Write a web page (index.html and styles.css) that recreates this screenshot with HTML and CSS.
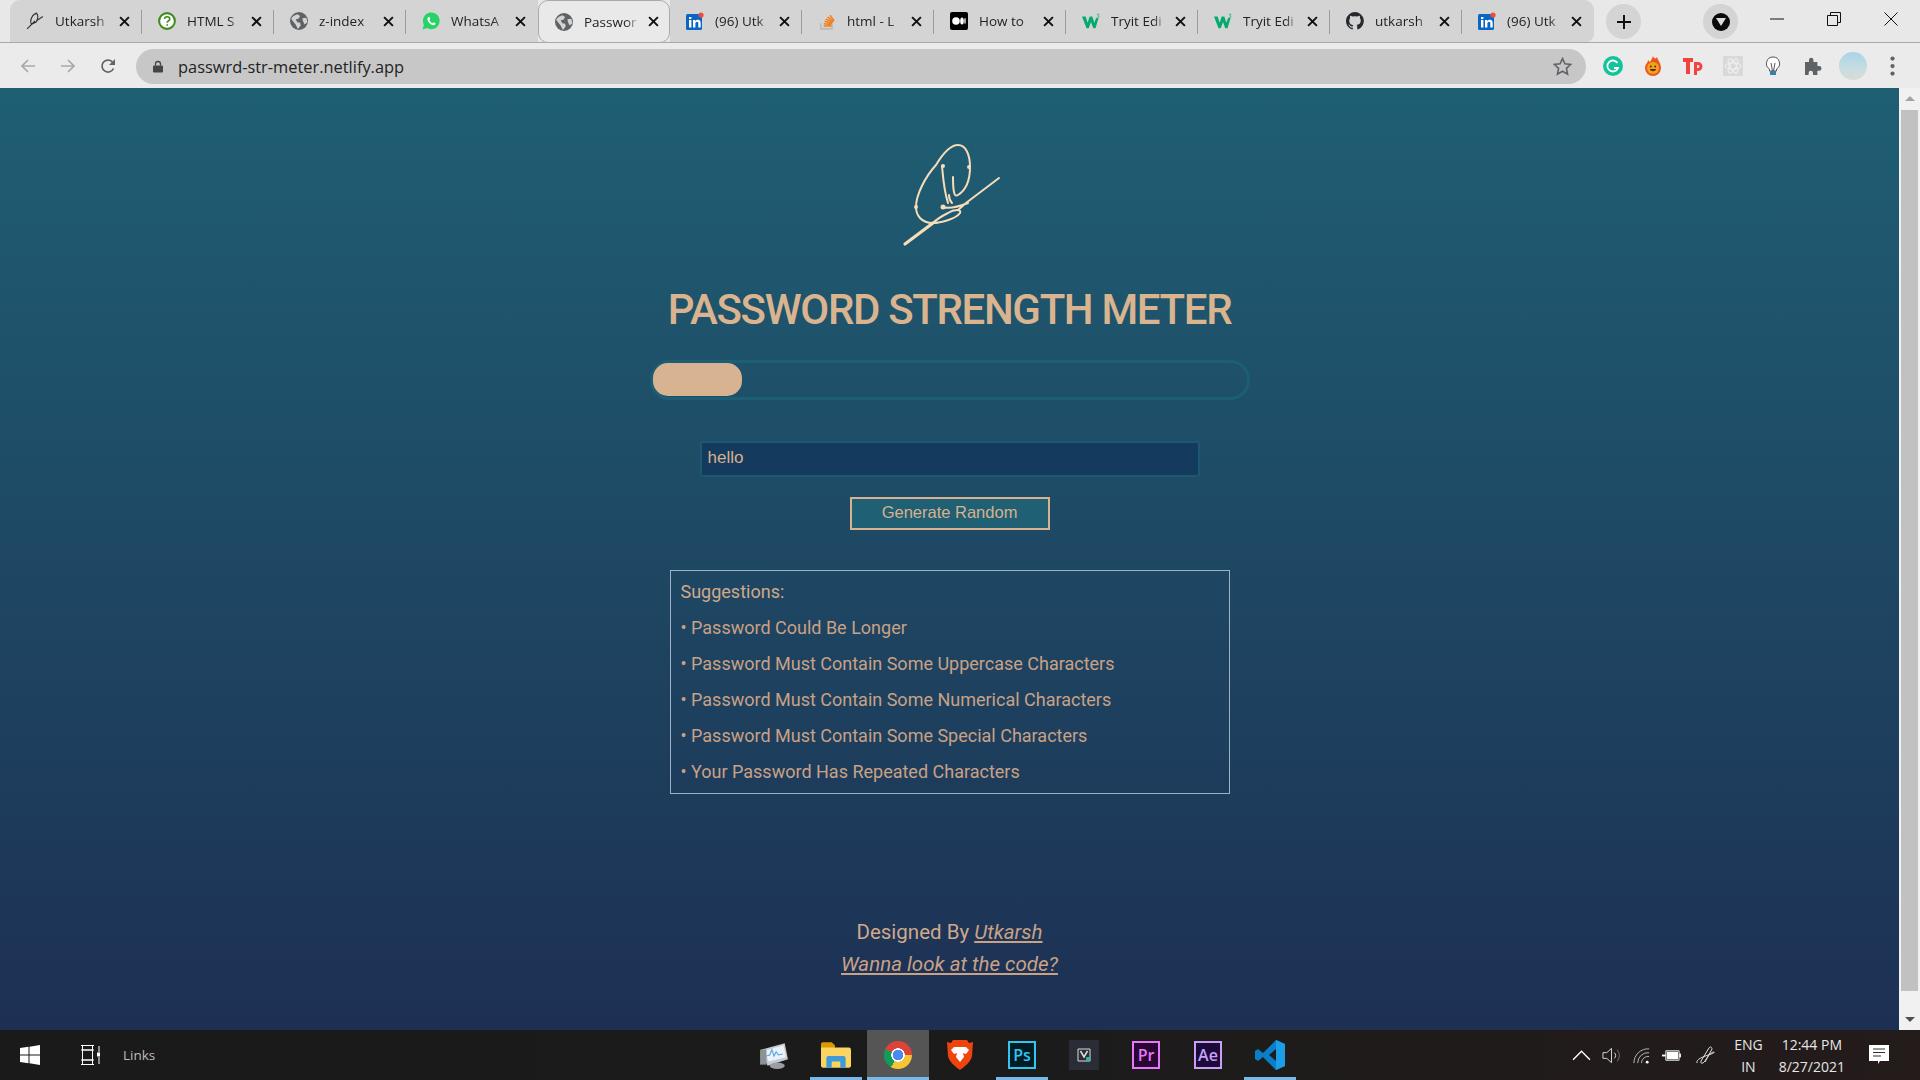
FILE: index.html

```html
<!DOCTYPE html>
<html lang="en">
<head>
  <meta charset="UTF-8">
  <meta name="viewport" content="width=device-width, initial-scale=1.0">
  <link rel="stylesheet" href="styles.css">
  <title>Password Strength Meter</title>
</head>
<body>
  <svg class="defs" width="0" height="0">
    <symbol id="globe" viewBox="0 0 16 16">
      <circle cx="8" cy="8" r="8" fill="#5f6368"/>
      <path d="M3 3.500 6.500 2 9 3.500 7.500 6 5 6.500 6.500 9 9 9.500 9.500 12 7 15 5 11 2.500 8 1 6ZM11 5.500l3.500-.5L15.500 9 13 11 11.500 8Z" fill="#d3d3d3"/>
    </symbol>
    <symbol id="linkedin" viewBox="0 0 18 18">
      <rect y="2" width="16" height="16" rx="1.500" fill="#0a66c2"/>
      <path d="M3 8h2.400v7.500H3ZM3 5h2.400v2H3ZM7 8h2.300v1.200C10 8.200 11 7.800 12 7.800c2 0 2.700 1.300 2.700 3.300v4.400h-2.400v-4c0-1-.3-1.700-1.200-1.700-1 0-1.700.7-1.700 1.800v3.900H7Z" fill="#fff"/>
      <circle cx="15" cy="3" r="2.600" fill="#ee4b3e"/>
    </symbol>
    <symbol id="wthree" viewBox="0 0 20 16">
      <path d="M0 3h4l2.300 7L8.500 3h3l2.200 7L15.500 5l3-.5L15 16h-2.500L10 9 7.500 16H5Z" fill="#04aa6d"/>
      <path d="M16.500.5h2.500l-1.300 1.500c1.500 0 1.500 2-.1 2-.5 0-.9-.1-1.200-.4" stroke="#04aa6d" stroke-width=".7" fill="none"/>
    </symbol>
    <symbol id="close" viewBox="0 0 10 10">
      <path d="M1 1l8 8M9 1 1 9" stroke="#111" stroke-width="1.800" fill="none"/>
    </symbol>
  </svg>

  <header class="tabstrip">
    <div class="tab">
      <svg class="favicon" viewBox="0 0 16 16"><path d="M1 15 8 8M5 11C3 8 5 3 9 1c2 1 2 5 0 8l-4 2ZM9 8l6-4" stroke="#333" fill="none"/></svg>
      <span class="tab-title">Utkarsh</span>
      <svg class="tab-close"><use href="#close"/></svg>
    </div>
    <div class="tab">
      <svg class="favicon" viewBox="0 0 16 16"><circle cx="8" cy="8" r="7" fill="#fff" stroke="#3f8a1c" stroke-width="1.800"/><path d="M5.700 6.200C5.900 4.800 6.800 4.200 8 4.200c1.400 0 2.400.8 2.400 2 0 1.800-2.200 1.700-2.200 3.400M8.200 10.800v1.400" stroke="#3f8a1c" stroke-width="1.500" fill="none"/></svg>
      <span class="tab-title">HTML S</span>
      <svg class="tab-close"><use href="#close"/></svg>
    </div>
    <div class="tab">
      <svg class="favicon"><use href="#globe"/></svg>
      <span class="tab-title">z-index</span>
      <svg class="tab-close"><use href="#close"/></svg>
    </div>
    <div class="tab tab-nosep">
      <svg class="favicon" viewBox="0 0 16 16"><path d="M.5 15.500 1.700 11.300A7.400 7.400 0 1 1 4.600 14.300Z" fill="#25d366"/><path d="M5.500 4.500c-1 1-1 2.500.2 4.200 1.300 1.800 3 3 4.600 3 1 0 1.800-.7 1.800-1.700L10.300 9l-.9.900C8.300 9.500 7 8.200 6.600 7l.8-.9-.9-1.800Z" fill="#fff"/></svg>
      <span class="tab-title">WhatsA</span>
      <svg class="tab-close"><use href="#close"/></svg>
    </div>
    <div class="tab tab-active tab-nosep">
      <svg class="favicon"><use href="#globe"/></svg>
      <span class="tab-title">Passwor</span>
      <svg class="tab-close"><use href="#close"/></svg>
    </div>
    <div class="tab">
      <svg class="favicon"><use href="#linkedin"/></svg>
      <span class="tab-title">(96) Utk</span>
      <svg class="tab-close"><use href="#close"/></svg>
    </div>
    <div class="tab">
      <svg class="favicon" viewBox="0 0 16 16"><path d="M2.500 10v5h10v-5" stroke="#bcbbbb" stroke-width="1.400" fill="none"/><path d="M5 12.500h7M5.200 10.400l6.800.8M5.800 8.300l6.600 1.900M7 6.200l6 3.200M8.700 4.300l5 4.400M10.700 2.800l3.600 5.200" stroke="#f48024" stroke-width="1.400" fill="none"/></svg>
      <span class="tab-title">html - L</span>
      <svg class="tab-close"><use href="#close"/></svg>
    </div>
    <div class="tab">
      <svg class="favicon" viewBox="0 0 18 18"><rect width="18" height="18" rx="2" fill="#000"/><circle cx="6" cy="9" r="3.800" fill="#fff"/><ellipse cx="12" cy="9" rx="1.800" ry="3.500" fill="#fff"/><ellipse cx="15" cy="9" rx=".7" ry="3.200" fill="#fff"/></svg>
      <span class="tab-title">How to</span>
      <svg class="tab-close"><use href="#close"/></svg>
    </div>
    <div class="tab">
      <svg class="favicon"><use href="#wthree"/></svg>
      <span class="tab-title">Tryit Edi</span>
      <svg class="tab-close"><use href="#close"/></svg>
    </div>
    <div class="tab">
      <svg class="favicon"><use href="#wthree"/></svg>
      <span class="tab-title">Tryit Edi</span>
      <svg class="tab-close"><use href="#close"/></svg>
    </div>
    <div class="tab">
      <svg class="favicon" viewBox="0 0 16 16"><path d="M8 0a8 8 0 0 0-2.500 15.600c.4.100.5-.2.500-.4v-1.400c-2.200.5-2.700-1-2.700-1-.4-.9-.9-1.200-.9-1.200-.7-.5.100-.5.100-.5.800.1 1.200.8 1.200.8.700 1.200 1.900.9 2.300.7.100-.5.300-.9.500-1.100-1.800-.2-3.600-.9-3.600-4 0-.9.300-1.600.8-2.100-.1-.2-.4-1 .1-2.100 0 0 .7-.2 2.200.8a7.600 7.600 0 0 1 4 0c1.500-1 2.200-.8 2.200-.8.400 1.100.2 1.900.1 2.100.5.600.8 1.300.8 2.100 0 3.100-1.900 3.700-3.700 3.900.3.300.6.800.6 1.500v2.200c0 .2.100.5.600.4A8 8 0 0 0 8 0Z" fill="#24292e"/></svg>
      <span class="tab-title">utkarsh</span>
      <svg class="tab-close"><use href="#close"/></svg>
    </div>
    <div class="tab tab-last tab-nosep">
      <svg class="favicon"><use href="#linkedin"/></svg>
      <span class="tab-title">(96) Utk</span>
      <svg class="tab-close"><use href="#close"/></svg>
    </div>
    <button class="newtab">
      <svg width="14" height="14" viewBox="0 0 14 14"><path d="M7 0v14M0 7h14" stroke="#111" stroke-width="2"/></svg>
    </button>
    <div class="profile-menu"><span class="profile-dot"><svg width="10" height="8" viewBox="0 0 10 8"><path d="M0 0h10L5 8Z" fill="#ddd"/></svg></span></div>
    <div class="window-controls">
      <svg width="14" height="14" viewBox="0 0 14 14"><path d="M0 7h14" stroke="#111"/></svg>
      <svg width="14" height="14" viewBox="0 0 14 14"><path d="M.5 3.500h10v10H.5ZM3.500 3.500v-3h10v10h-3" stroke="#111" fill="none"/></svg>
      <svg width="14" height="14" viewBox="0 0 14 14"><path d="M.5.500l13 13M13.500.500l-13 13" stroke="#111" fill="none"/></svg>
    </div>
  </header>

  <nav class="toolbar">
    <svg class="nav-icon" viewBox="0 0 16 16"><path d="M15 8H2M8 2 2 8l6 6" stroke="#a9a9a9" stroke-width="1.700" fill="none"/></svg>
    <svg class="nav-icon" viewBox="0 0 16 16"><path d="M1 8h13M8 2l6 6-6 6" stroke="#a9a9a9" stroke-width="1.700" fill="none"/></svg>
    <svg class="nav-icon" viewBox="0 0 16 16"><path d="M13.500 10.500A6 6 0 1 1 12.300 3.800" stroke="#5f6368" stroke-width="1.700" fill="none"/><path d="M15 1v6H9Z" fill="#5f6368"/></svg>
    <div class="omnibox">
      <svg class="lock" viewBox="0 0 10 12"><path d="M2.500 5V3.500a2.500 2.500 0 0 1 5 0V5" stroke="#444" stroke-width="1.300" fill="none"/><rect y="5" width="10" height="7" rx="1" fill="#444"/></svg>
      <span class="url">passwrd-str-meter.netlify.app</span>
      <svg class="star" viewBox="0 0 18 18"><path d="M9 1.500l2.300 5 5.400.6-4 3.700 1.100 5.400L9 13.500l-4.800 2.700 1.100-5.400-4-3.700 5.400-.6Z" stroke="#5f6368" stroke-width="1.500" fill="none"/></svg>
    </div>
    <div class="extensions">
      <svg class="ext" viewBox="0 0 20 20"><circle cx="10" cy="10" r="10" fill="#15c39a"/><path d="M14.500 7A5.500 5.500 0 1 0 15 12h-4" stroke="#fff" stroke-width="1.800" fill="none"/></svg>
      <svg class="ext" viewBox="0 0 20 20"><path d="M10 0c1 3 3 3 4 1 0 2 4 6 4 11a8 8 0 0 1-16 0c0-4 3-5 3-8 1 1 2 2 2 2 1-2 2-3 3-6Z" fill="#e8591c"/><circle cx="10" cy="12" r="6" fill="#f3a21e"/><path d="M6.800 13c1 3 5.400 3 6.400 0Z" fill="#5b2c08"/><circle cx="7.800" cy="10.500" r="1" fill="#5b2c08"/><circle cx="12.200" cy="10.500" r="1" fill="#5b2c08"/></svg>
      <svg class="ext" viewBox="0 0 20 20"><path d="M0 2h10v4H7v12H3V6H0ZM11 6h4a4 4 0 0 1 0 9h-1v4h-3Zm3 3v3h1a1.500 1.500 0 0 0 0-3Z" fill="#f4433c"/></svg>
      <svg class="ext" viewBox="0 0 20 20"><rect width="20" height="20" rx="1" fill="#d9d9d9"/><ellipse cx="10" cy="10" rx="8" ry="3.200" stroke="#f2f2f2" fill="none"/><ellipse cx="10" cy="10" rx="8" ry="3.200" transform="rotate(60 10 10)" stroke="#f2f2f2" fill="none"/><ellipse cx="10" cy="10" rx="8" ry="3.200" transform="rotate(120 10 10)" stroke="#f2f2f2" fill="none"/></svg>
      <svg class="ext" viewBox="0 0 20 20"><path d="M10 1a6.500 6.500 0 0 0-3.500 12v2h7v-2A6.500 6.500 0 0 0 10 1Z" fill="#fff" stroke="#555"/><path d="M8 7l1.500 8M12 7l-1.500 8" stroke="#555" fill="none"/><rect x="7" y="15" width="6" height="4" fill="#3b7fa8"/></svg>
      <svg class="ext" viewBox="0 0 20 20"><path d="M2 6h4V4a2.200 2.200 0 0 1 4.400 0v2h4v4h1.700a2.400 2.400 0 0 1 0 4.800h-1.700V19H10v-2a2.200 2.200 0 0 0-4.400 0v2H2Z" fill="#5f6368"/></svg>
      <span class="avatar"></span>
      <svg class="ext ext-menu" viewBox="0 0 4 16"><circle cx="2" cy="2" r="1.700" fill="#5f6368"/><circle cx="2" cy="8" r="1.700" fill="#5f6368"/><circle cx="2" cy="14" r="1.700" fill="#5f6368"/></svg>
    </div>
  </nav>

  <div class="viewport">
    <main class="page">
      <svg class="signature" viewBox="0 0 110 115">
        <path class="signature-tail" d="M5 109 33 88"/>
        <path d="M33 88C21 88 16 80 16 72 16 60 25 42 36 30 42 20 50 10 58 10 66 10 70 20 70 32 70 45 66 55 58 60 55 62 53 60 53 42M42 31C43 42 44 56 48 68M49 60C49 64 50 66 52 68M42 72C48 74 58 72 68 68M33 88C40 88 56 84 60 78 62 74 54 74 48 78 42 81 36 85 33 88M99 43 66 68 58 75"/>
        <circle cx="43" cy="31" r="2"/>
        <circle cx="69" cy="32" r="2"/>
        <circle cx="16" cy="72" r="2"/>
        <circle cx="43" cy="72" r="2.500"/>
      </svg>
      <h1 class="title">PASSWORD STRENGTH METER</h1>
      <div class="meter"><div class="meter-fill" style="width: 89px"></div></div>
      <input class="password" type="text" value="hello">
      <button class="generate">Generate Random</button>
      <section class="suggestions">
        <p class="suggestions-head">Suggestions:</p>
        <p>&bull; Password Could Be Longer</p>
        <p>&bull; Password Must Contain Some Uppercase Characters</p>
        <p>&bull; Password Must Contain Some Numerical Characters</p>
        <p>&bull; Password Must Contain Some Special Characters</p>
        <p>&bull; Your Password Has Repeated Characters</p>
      </section>
      <footer class="credits">
        <p>Designed By <a href="#">Utkarsh</a></p>
        <p><a href="#">Wanna look at the code?</a></p>
      </footer>
    </main>
    <div class="scrollbar">
      <span class="arrow-up"></span>
      <span class="thumb"></span>
      <span class="arrow-down"></span>
    </div>
  </div>

  <footer class="taskbar">
    <div class="task-left">
      <svg class="start" viewBox="0 0 20 20"><path d="M0 3 8.500 1.800V9.500H0ZM9.500 1.700 20 0V9.500H9.500ZM0 10.500H8.500V18.200L0 17ZM9.500 10.500H20V20L9.500 18.300Z" fill="#fff"/></svg>
      <svg class="taskview" viewBox="0 0 20 20"><path d="M1 .5h13M1 19.500h13M2.500 5h10v10h-10ZM1 5h13M1 15h13M2.500 1v4M12.500 1v4M2.500 15v4M12.500 15v4M19 1v6M19 12v7" stroke="#fff" fill="none"/><rect x="17" y="7.500" width="4" height="4" fill="#fff"/></svg>
      <span class="links">Links</span>
    </div>
    <div class="task-apps">
      <span class="app">
        <svg viewBox="0 0 28 26"><path d="M2 8 24 2l3 15-19 6Z" fill="#c8ccd0"/><path d="M5 9l18-5 2 11-16 4Z" fill="#e8f2fa"/><path d="M7 14l3-1 2-5 2 6 2-4 2 3 4-1" stroke="#5ba3d8" fill="none"/><ellipse cx="17" cy="23" rx="7" ry="3" fill="#9a9ea3"/><rect x="1" y="8" width="6" height="14" fill="#8d9196"/><rect x="1.500" y="10" width="2" height="1.500" fill="#46c846"/></svg>
      </span>
      <span class="app app-open">
        <svg viewBox="0 0 28 24"><path d="M0 2a2 2 0 0 1 2-2h8l3 3v4H0Z" fill="#d99a00"/><path d="M0 5h26a2 2 0 0 1 2 2v15a2 2 0 0 1-2 2H2a2 2 0 0 1-2-2Z" fill="#fcd462"/><path d="M5 24v-9a2 2 0 0 1 2-2h14a2 2 0 0 1 2 2v9h-5v-6h-8v6Z" fill="#3f9ad8"/></svg>
      </span>
      <span class="app app-open app-active"><span class="chrome"></span></span>
      <span class="app">
        <svg viewBox="0 0 26 30"><path d="M6 0h14l2 3 4-1-1 14c-1 6-8 11-12 14C9 27 2 22 1 16L0 2l4 1Z" fill="#f0440f"/><path d="M7 7h12l3 3-3 4-3-1 1 4-4 5-4-5 1-4-3 1-3-4Z" fill="#fff"/></svg>
      </span>
      <span class="app app-open"><span class="adobe adobe-ps">Ps</span></span>
      <span class="app">
        <span class="tile"><svg viewBox="0 0 14 14"><path d="M1 1h12v12H1Z" stroke="#ddd" fill="none"/><path d="M3.500 3 7 9l3.500-6" stroke="#ddd" stroke-width="1.600" fill="none"/><rect x="9" y="9" width="4.500" height="4.500" rx="1" fill="#3ab09e"/></svg></span>
      </span>
      <span class="app"><span class="adobe adobe-pr">Pr</span></span>
      <span class="app"><span class="adobe adobe-ae">Ae</span></span>
      <span class="app app-open">
        <svg viewBox="0 0 30 30"><path d="M21 0 30 4V26L21 30 8 17 3 21 0 19V11L3 9l5 4Zm0 9-7 6 7 6Z" fill="#0a7fc8"/><path d="M21 0 30 4V26L21 30Z" fill="#1d9de6"/></svg>
      </span>
    </div>
    <div class="tray">
      <svg class="tray-icon" viewBox="0 0 18 12"><path d="M1 10l8-8 8 8" stroke="#fff" stroke-width="1.300" fill="none"/></svg>
      <svg class="tray-icon" viewBox="0 0 20 20"><path d="M1 7h4l5-4.500v15L5 13H1Z" stroke="#ddd" fill="none"/><path d="M13 7a4 4 0 0 1 0 6" stroke="#ddd" fill="none"/><path d="M16 4a9 9 0 0 1 0 12" stroke="#777" fill="none"/></svg>
      <svg class="tray-icon" viewBox="0 0 20 20"><path d="M2 18A15 15 0 0 1 18 3M6 18A11 11 0 0 1 18 7M10 18A7 7 0 0 1 18 11" stroke="#bbb" fill="none"/><circle cx="16" cy="17" r="1.500" fill="#fff"/></svg>
      <svg class="tray-icon" viewBox="0 0 20 14"><path d="M4 2H18V12H4Z" stroke="#eee" fill="none"/><rect x="5" y="3" width="12" height="8" fill="#fff"/><rect x="18" y="5" width="2" height="4" fill="#eee"/><path d="M0 7h4" stroke="#fff" stroke-width="2"/></svg>
      <svg class="tray-icon tray-pen" viewBox="0 0 20 20"><path d="M1 18C0 14 7 12 12 10 15 9 19 8 18 7 16 7 13 9 9 16 7 19 4 19 5 16L13 3c1-2 3-1 3 1L9 17" stroke="#ddd" fill="none"/></svg>
      <span class="lang"><span>ENG</span><span>IN</span></span>
      <span class="clock"><span>12:44 PM</span><span>8/27/2021</span></span>
      <svg class="notify" viewBox="0 0 20 20"><path d="M0 0h20v16H11l-2 3v-3H0Z" fill="#fff"/><path d="M4 4h12M4 7.500h12M4 11h8" stroke="#333"/></svg>
    </div>
  </footer>
</body>
</html>
```

FILE: styles.css

```css
* {
  box-sizing: border-box;
}

body {
  margin: 0;
  width: 1920px;
  height: 1080px;
  display: flex;
  flex-direction: column;
  overflow: hidden;
  font-family: "Open Sans", sans-serif;
}

.defs {
  display: none;
}

/* browser tabs */
.tabstrip {
  height: 43px;
  flex: none;
  display: flex;
  align-items: flex-start;
  padding-left: 10px;
  background: #e8e8e8;
  border-bottom: 1px solid #a8a8a8;
}

.tab {
  width: 132px;
  height: 42px;
  flex: none;
  display: flex;
  align-items: center;
  padding: 0 12px 0 16px;
  background: #d4d4d4;
  position: relative;
  color: #222;
  font-size: 13.5px;
}

.tab::after {
  content: "";
  position: absolute;
  right: 0;
  top: 10px;
  width: 1px;
  height: 24px;
  background: #9c9c9c;
}

.tab-nosep::after {
  display: none;
}

.tab:first-child {
  border-top-left-radius: 10px;
}

.tab-last {
  border-top-right-radius: 10px;
  border-bottom-right-radius: 8px;
}

.tab-active {
  height: 43px;
  padding-right: 10px;
  background: #e9e9e9;
  border: 1px solid #aaa;
  border-radius: 10px;
}

.favicon {
  width: 18px;
  height: 18px;
  flex: none;
  margin-right: 11px;
}

.tab-title {
  flex: 1;
  min-width: 0;
  white-space: nowrap;
  -webkit-mask-image: linear-gradient(to right, #000 75%, transparent 100%);
  mask-image: linear-gradient(to right, #000 75%, transparent 100%);
}

.tab-close {
  width: 11px;
  height: 11px;
  flex: none;
  margin-left: 8px;
}

.newtab {
  width: 35px;
  height: 35px;
  flex: none;
  margin: 4px 0 0 12px;
  padding: 0;
  border: none;
  border-radius: 50%;
  background: #d4d4d4;
  display: flex;
  align-items: center;
  justify-content: center;
}

.profile-menu {
  width: 35px;
  height: 35px;
  flex: none;
  margin: 4px 0 0 62px;
  border-radius: 50%;
  background: #d4d4d4;
  display: flex;
  align-items: center;
  justify-content: center;
}

.profile-dot {
  width: 18px;
  height: 18px;
  border-radius: 50%;
  background: #0a0a0a;
  display: flex;
  align-items: center;
  justify-content: center;
}

.window-controls {
  margin: 12px 0 0 auto;
  width: 150px;
  padding-right: 22px;
  display: flex;
  justify-content: space-between;
}

/* address bar */
.toolbar {
  height: 45px;
  flex: none;
  display: flex;
  align-items: center;
  padding: 0 20px;
  background: #ebebeb;
}

.nav-icon {
  width: 16px;
  height: 16px;
  flex: none;
  margin-right: 24px;
}

.omnibox {
  width: 1450px;
  height: 35px;
  margin: 1px 0 0 -4px;
  flex: none;
  display: flex;
  align-items: center;
  padding: 0 14px 0 17px;
  border-radius: 18px;
  background: #c7c7c7;
}

.lock {
  width: 10px;
  height: 13px;
  flex: none;
}

.url {
  margin-left: 15px;
  color: #222;
  font-size: 16.4px;
}

.star {
  width: 19px;
  height: 19px;
  margin-left: auto;
}

.extensions {
  flex: 1;
  display: flex;
  align-items: center;
  padding-left: 17px;
  gap: 20px;
}

.ext {
  width: 20px;
  height: 20px;
  flex: none;
}

.ext-menu {
  width: 5px;
  margin-left: 3px;
}

.avatar {
  width: 28px;
  height: 28px;
  flex: none;
  margin-left: -4px;
  border-radius: 50%;
  background: linear-gradient(#a8d4e6, #c8dde0 60%, #d8dcd4);
}

/* the page itself */
.viewport {
  flex: 1;
  min-height: 0;
  display: flex;
}

.page {
  flex: 1;
  display: flex;
  flex-direction: column;
  align-items: center;
  padding-top: 47px;
  background: linear-gradient(#1f5f73, #1d3054);
  color: #d8b18f;
  font-family: Roboto, sans-serif;
}

.signature {
  width: 110px;
  height: 115px;
  flex: none;
  margin-left: 11px;
  fill: none;
  stroke: #f6dcb9;
  stroke-width: 2;
  stroke-linecap: round;
}

.signature .signature-tail {
  stroke-width: 3.2;
}

.signature circle {
  fill: #f6dcb9;
  stroke: none;
}

.title {
  margin: 35px 0 0;
  font-size: 42px;
  line-height: 50px;
  font-weight: 500;
  letter-spacing: -1.35px;
  color: #d9b48f;
}

.meter {
  width: 600px;
  height: 40px;
  margin-top: 25px;
  padding: 0;
  border: 3px solid #1c5f75;
  border-radius: 20px;
}

.meter-fill {
  height: 33px;
  border-radius: 15px;
  background: #d8b392;
}

.password {
  width: 500px;
  height: 36px;
  margin-top: 41px;
  padding: 0 6px 2px;
  border: 2px solid #1c5870;
  border-radius: 3px;
  background: #143a5e;
  color: #d8b18f;
  font-family: "Liberation Sans", sans-serif;
  font-size: 17px;
}

.generate {
  width: 200px;
  height: 33px;
  margin-top: 20px;
  padding: 0 0 2px;
  border: 2px solid #d8b18f;
  background: #1f6074;
  color: #d8b18f;
  font-family: "Liberation Sans", sans-serif;
  font-size: 16.5px;
}

.suggestions {
  width: 560px;
  margin-top: 40px;
  padding: 10px 10px 11px;
  display: flex;
  flex-direction: column;
  gap: 15px;
  border: 1px solid #9db2c6;
  font-size: 18px;
  line-height: 21px;
  color: #c9a185;
}

.suggestions p {
  margin: 0;
}

.suggestions .suggestions-head {
  color: #d0a98b;
}

.credits {
  margin-top: 122px;
  text-align: center;
  font-size: 20.5px;
  line-height: 32px;
  color: #cfa98a;
}

.credits p {
  margin: 0;
}

.credits a {
  color: #c9a185;
  font-style: italic;
}

.scrollbar {
  width: 21px;
  flex: none;
  display: flex;
  flex-direction: column;
  align-items: center;
  background: #f1f1f1;
}

.arrow-up {
  margin-top: 8px;
  border: 5px solid transparent;
  border-top: none;
  border-bottom: 5px solid #a3a3a3;
}

.thumb {
  width: 17px;
  height: 881px;
  margin-top: 9px;
  background: #c1c1c1;
}

.arrow-down {
  margin-top: 26px;
  border: 5px solid transparent;
  border-bottom: none;
  border-top: 5px solid #505050;
}

/* windows taskbar */
.taskbar {
  height: 50px;
  flex: none;
  display: flex;
  align-items: stretch;
  background: linear-gradient(to right, #1a1a1a, #1c1b1b 55%, #241b1b);
  color: #e6e6e6;
  font-family: "Open Sans", sans-serif;
}

.task-left {
  width: 743px;
  flex: none;
  display: flex;
  align-items: center;
  padding-left: 20px;
}

.start {
  width: 20px;
  height: 20px;
}

.taskview {
  width: 20px;
  height: 20px;
  margin-left: 40px;
}

.links {
  margin-left: 23px;
  color: #bdbdbd;
  font-size: 13.5px;
}

.task-apps {
  display: flex;
}

.app {
  width: 62px;
  display: flex;
  align-items: center;
  justify-content: center;
  position: relative;
}

.app svg {
  width: 30px;
  height: 30px;
}

.app-open::after {
  content: "";
  position: absolute;
  left: 5px;
  right: 5px;
  bottom: 0;
  height: 3px;
  background: #76b9ed;
}

.app-active {
  background: #555;
}

.app-active::after {
  left: 0;
  right: 0;
}

.chrome {
  width: 28px;
  height: 28px;
  border-radius: 50%;
  background:
    radial-gradient(circle, #4a8af0 0 5px, #fff 5.5px 6.5px, transparent 7px),
    conic-gradient(from -65deg, #db4437 0 155deg, #f4c534 155deg 275deg, #0f9d58 275deg);
}

.adobe {
  width: 28px;
  height: 28px;
  display: flex;
  align-items: center;
  justify-content: center;
  border: 2px solid;
  font-family: "Open Sans", sans-serif;
  font-size: 16px;
  font-weight: 600;
}

.adobe-ps {
  color: #31c5f0;
  background: #001d26;
}

.adobe-pr {
  color: #e579f7;
  background: #2a0634;
}

.adobe-ae {
  color: #c9a0f5;
  background: #1c0a3a;
}

.tile {
  width: 30px;
  height: 30px;
  display: flex;
  align-items: center;
  justify-content: center;
  background: #2b2d36;
}

.tile svg {
  width: 14px;
  height: 14px;
}

.tray {
  margin-left: auto;
  display: flex;
  align-items: center;
  padding-right: 31px;
}

.tray-icon {
  width: 19px;
  height: 19px;
  flex: none;
  margin-right: 11px;
}

.tray-pen {
  margin-left: 4px;
  margin-right: 0;
  width: 20px;
  height: 20px;
}

.lang,
.clock {
  display: flex;
  flex-direction: column;
  align-items: center;
  gap: 3px;
  font-size: 14px;
  line-height: 19px;
}

.lang {
  margin-left: 18px;
}

.clock {
  margin-left: 16px;
}

.notify {
  width: 20px;
  height: 20px;
  margin-left: 24px;
}
```
